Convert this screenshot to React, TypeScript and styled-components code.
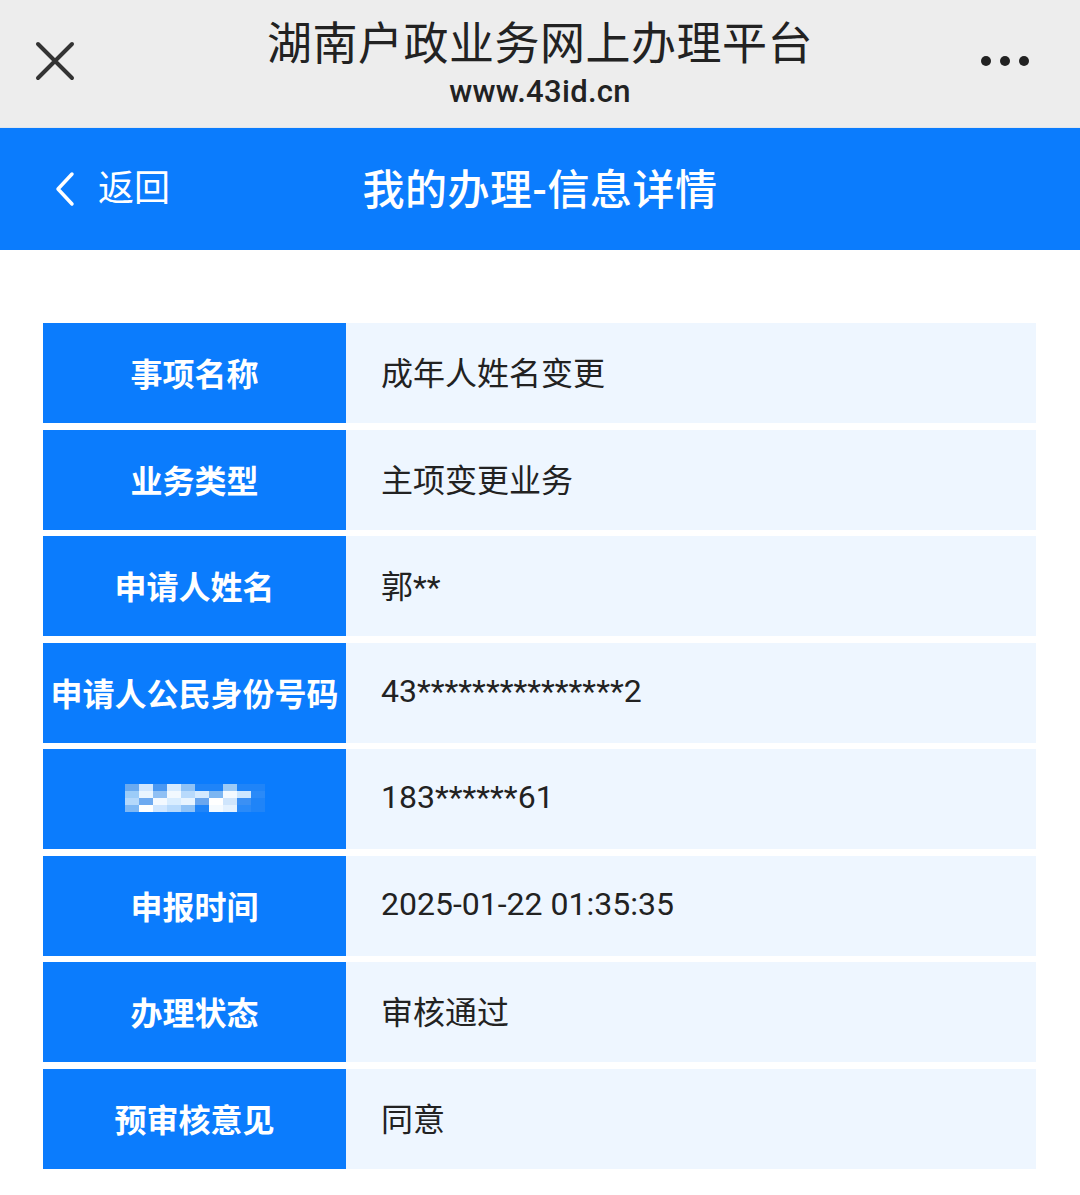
import styled, { createGlobalStyle } from "styled-components";

const GlobalStyle = createGlobalStyle`
  html, body {
    margin: 0;
    padding: 0;
    background: #ffffff;
  }
  body {
    font-family: Roboto, "Noto Sans CJK SC", sans-serif;
  }
`;

const rows: { label: string; value: string; masked?: boolean }[] = [
  { label: "事项名称", value: "成年人姓名变更" },
  { label: "业务类型", value: "主项变更业务" },
  { label: "申请人姓名", value: "郭**" },
  { label: "申请人公民身份号码", value: "43***************2" },
  { label: "联系电话", value: "183******61", masked: true },
  { label: "申报时间", value: "2025-01-22 01:35:35" },
  { label: "办理状态", value: "审核通过" },
  { label: "预审核意见", value: "同意" },
];

// pixelated mosaic colours, row by row (10 cols x 4 rows)
const mosaic = [
  ["#6aaaf0", "#cfe6ff", "#4a98f2", "#d6ebff", "#8fc2f6", "#1f84f8", "#1f84f8", "#9ccaf6", "#1f84f8", "#1f84f8"],
  ["#9cccf8", "#e9f5ff", "#8fc0f4", "#f2f9ff", "#b8dafc", "#d5eaff", "#7cb6f2", "#f4faff", "#cde7ff", "#2a8af8"],
  ["#b4d8fb", "#6eaaf0", "#f3f9ff", "#d9edff", "#e8f4ff", "#6aa6ee", "#ffffff", "#cfe5fc", "#3b90f4", "#1f84f8"],
  ["#7fb8f4", "#ffffff", "#cfe6ff", "#b8dafc", "#8fc2f6", "#1f84f8", "#f4faff", "#e3f1ff", "#2a8af8", "#1f84f8"],
];

const Mosaic = () => (
  <svg width="140" height="28" viewBox="0 0 140 28">
    {mosaic.map((line, r) =>
      line.map((c, i) => (
        <rect key={`${r}-${i}`} x={i * 14} y={r * 7} width="14" height="7" fill={c} />
      ))
    )}
  </svg>
);

const App = () => {
  return (
    <Page>
      <GlobalStyle />
      <BrowserBar>
        <CloseButton>
          <svg width="40" height="40" viewBox="0 0 40 40">
            <path d="M3 3 L37 37 M37 3 L3 37" stroke="#333" strokeWidth="4" strokeLinecap="round" />
          </svg>
        </CloseButton>
        <TitleBlock>
          <SiteTitle>湖南户政业务网上办理平台</SiteTitle>
          <SiteUrl>www.43id.cn</SiteUrl>
        </TitleBlock>
        <MoreButton>
          <svg width="50" height="12" viewBox="0 0 50 12">
            <circle cx="6" cy="6" r="5" fill="#222" />
            <circle cx="25" cy="6" r="5" fill="#222" />
            <circle cx="44" cy="6" r="5" fill="#222" />
          </svg>
        </MoreButton>
      </BrowserBar>

      <NavBar>
        <BackLink>
          <svg width="22" height="36" viewBox="0 0 22 36">
            <path d="M18 3 L4 18 L18 33" stroke="#fff" strokeWidth="3.5" fill="none" strokeLinecap="round" strokeLinejoin="round" />
          </svg>
          <span>返回</span>
        </BackLink>
        <NavTitle>我的办理-信息详情</NavTitle>
      </NavBar>

      <DetailTable>
        {rows.map((row) => (
          <Row key={row.label}>
            <LabelCell>{row.masked ? <Mosaic /> : row.label}</LabelCell>
            <ValueCell>{row.value}</ValueCell>
          </Row>
        ))}
      </DetailTable>
    </Page>
  );
};

const Page = styled.div`
  width: 1080px;
  min-height: 1195px;
  background: #ffffff;
`;

const BrowserBar = styled.header`
  height: 127px;
  background: #ededed;
  border-bottom: 1px solid #dfe6ee;
  display: grid;
  grid-template-columns: 140px 1fr 140px;
  align-items: center;
`;

const CloseButton = styled.div`
  display: flex;
  align-items: center;
  padding-left: 35px;
  margin-top: -6px;
`;

const MoreButton = styled.div`
  display: flex;
  justify-content: flex-end;
  padding-right: 50px;
  margin-top: -6px;
`;

const TitleBlock = styled.div`
  display: flex;
  flex-direction: column;
  align-items: center;
  margin-top: 4px;
`;

const SiteTitle = styled.div`
  font-size: 45px;
  line-height: 52px;
  color: #222;
  font-weight: 400;
  letter-spacing: 0.5px;
`;

const SiteUrl = styled.div`
  font-size: 31px;
  line-height: 40px;
  margin-top: 1px;
  color: #222;
  font-weight: 500;
  letter-spacing: 0.3px;
`;

const NavBar = styled.nav`
  height: 122px;
  background: #0b7cfd;
  position: relative;
  display: flex;
  align-items: center;
  justify-content: center;
`;

const BackLink = styled.div`
  position: absolute;
  left: 54px;
  top: 0;
  bottom: 0;
  display: flex;
  align-items: center;
  gap: 22px;
  color: #fff;
  font-size: 36px;

  span {
    line-height: 1;
  }
`;

const NavTitle = styled.h1`
  margin: -6px 0 0;
  color: #fff;
  font-size: 42px;
  font-weight: 500;
  letter-spacing: 0.5px;
`;

const DetailTable = styled.section`
  margin: 73px 44px 0 43px;
  display: flex;
  flex-direction: column;
  gap: 6.5px;
`;

const Row = styled.div`
  height: 100px;
  display: grid;
  grid-template-columns: 303px 1fr;
`;

const LabelCell = styled.div`
  background: #0b7cfd;
  color: #fff;
  font-size: 32px;
  font-weight: 700;
  display: flex;
  align-items: center;
  justify-content: center;
  white-space: nowrap;
  padding-bottom: 2px;
`;

const ValueCell = styled.div`
  background: #eef6ff;
  color: #222;
  font-size: 32px;
  display: flex;
  align-items: center;
  padding-left: 35px;
  padding-bottom: 4px;
`;

export default App;
